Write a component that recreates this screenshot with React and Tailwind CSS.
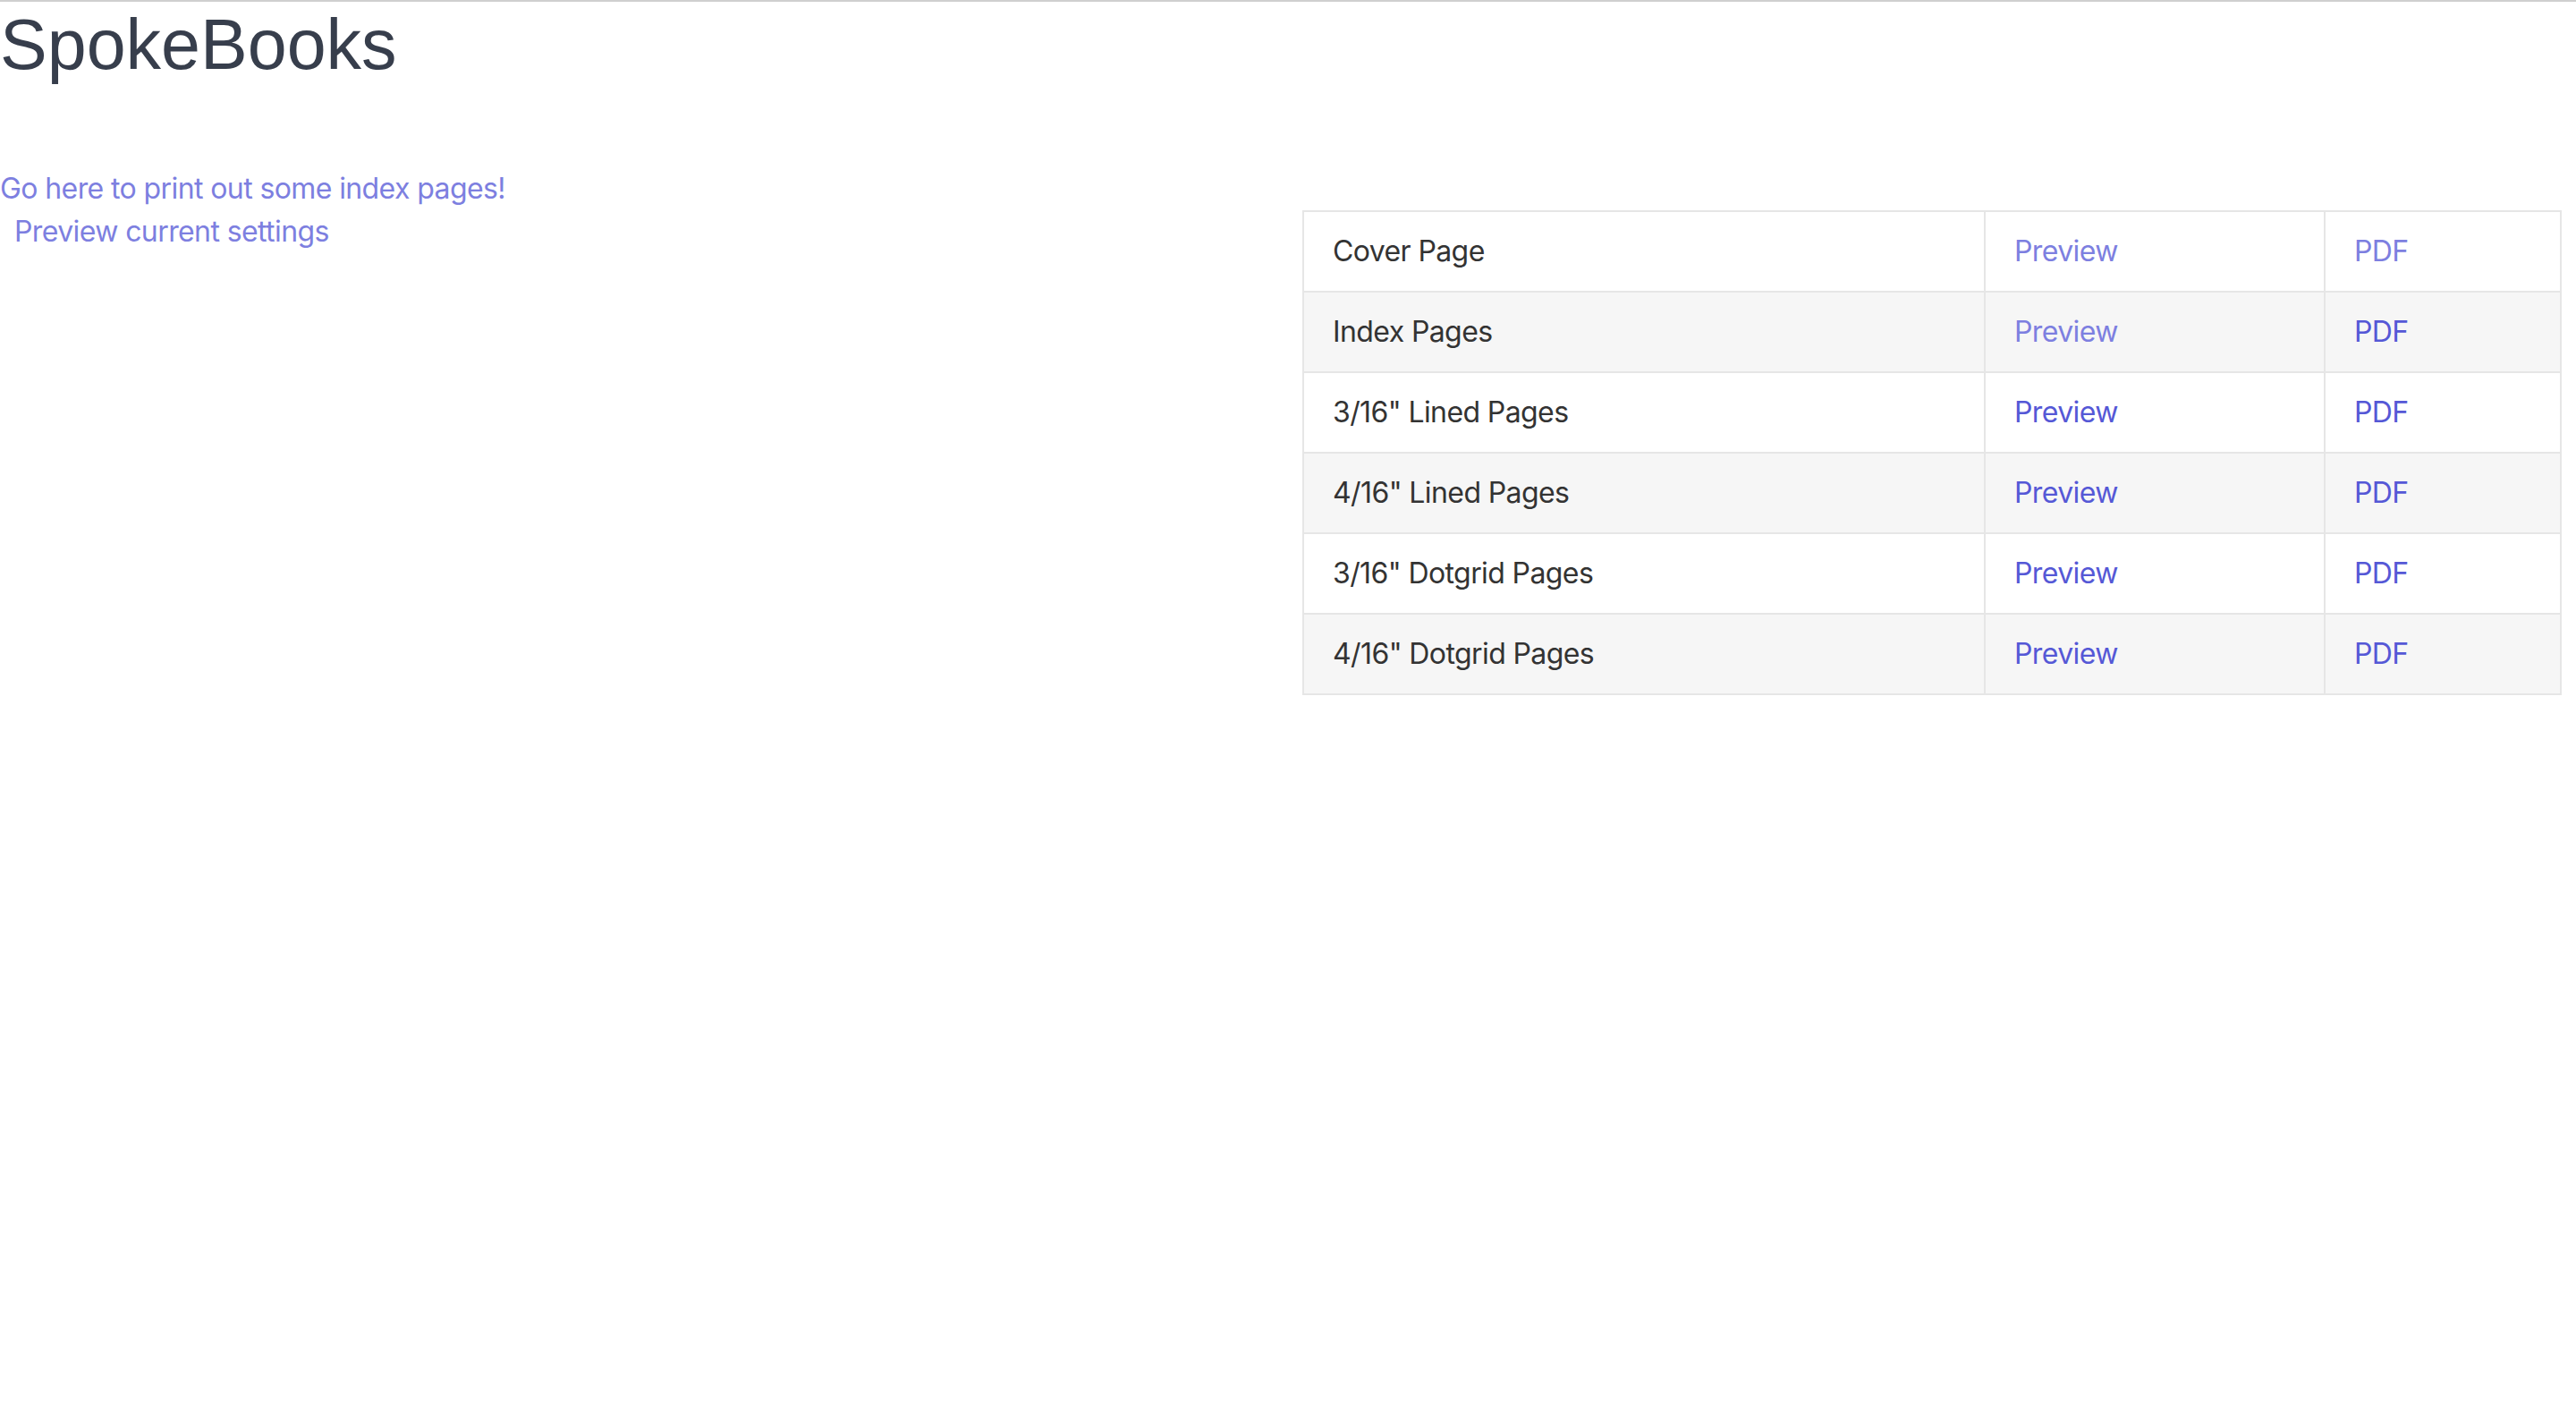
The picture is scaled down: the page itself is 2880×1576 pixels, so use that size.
import React from 'react';

const rows = [
  { name: 'Cover Page', preview: 'visited', pdf: 'visited' },
  { name: 'Index Pages', preview: 'visited', pdf: 'new' },
  { name: '3/16" Lined Pages', preview: 'new', pdf: 'new' },
  { name: '4/16" Lined Pages', preview: 'new', pdf: 'new' },
  { name: '3/16" Dotgrid Pages', preview: 'new', pdf: 'new' },
  { name: '4/16" Dotgrid Pages', preview: 'new', pdf: 'new' },
];

const linkColor = (state) => (state === 'visited' ? 'text-[#7d7fe0]' : 'text-[#5558d6]');

const App = () => {
  return (
    <div className="min-h-screen bg-white border-t-2 border-[#cfcfcf] font-['Inter','Noto_Sans',sans-serif] text-[32px] leading-[48px] tracking-[-0.6px]">
      {/* title */}
      <h1 className="font-['Liberation_Sans',Arial,sans-serif] text-[79px] leading-[96px] tracking-normal text-[#373e4c]">
        SpokeBooks
      </h1>

      <div className="mt-[89px]">
        <a href="#" className="text-[#7d7fe0]">Go here to print out some index pages!</a>
      </div>

      <div className="grid grid-cols-2">
        <div className="pl-4">
          <a href="#" className="text-[#7d7fe0]">Preview current settings</a>
        </div>

        {/* downloads table */}
        <div className="px-4">
          <table className="w-full table-fixed border-collapse border-2 border-[#e6e6e6]">
            <colgroup>
              <col className="w-[762px]" />
              <col className="w-[380px]" />
              <col />
            </colgroup>
            <tbody>
              {rows.map((row, i) => (
                <tr key={row.name} className={i % 2 === 1 ? 'bg-[#f6f6f6]' : 'bg-white'}>
                  <td className="border-2 border-[#e6e6e6] px-8 py-5 text-[#333333]">{row.name}</td>
                  <td className="border-2 border-[#e6e6e6] px-8 py-5">
                    <a href="#" className={linkColor(row.preview)}>Preview</a>
                  </td>
                  <td className="border-2 border-[#e6e6e6] px-8 py-5">
                    <a href="#" className={linkColor(row.pdf)}>PDF</a>
                  </td>
                </tr>
              ))}
            </tbody>
          </table>
        </div>
      </div>
    </div>
  );
};

export default App;
